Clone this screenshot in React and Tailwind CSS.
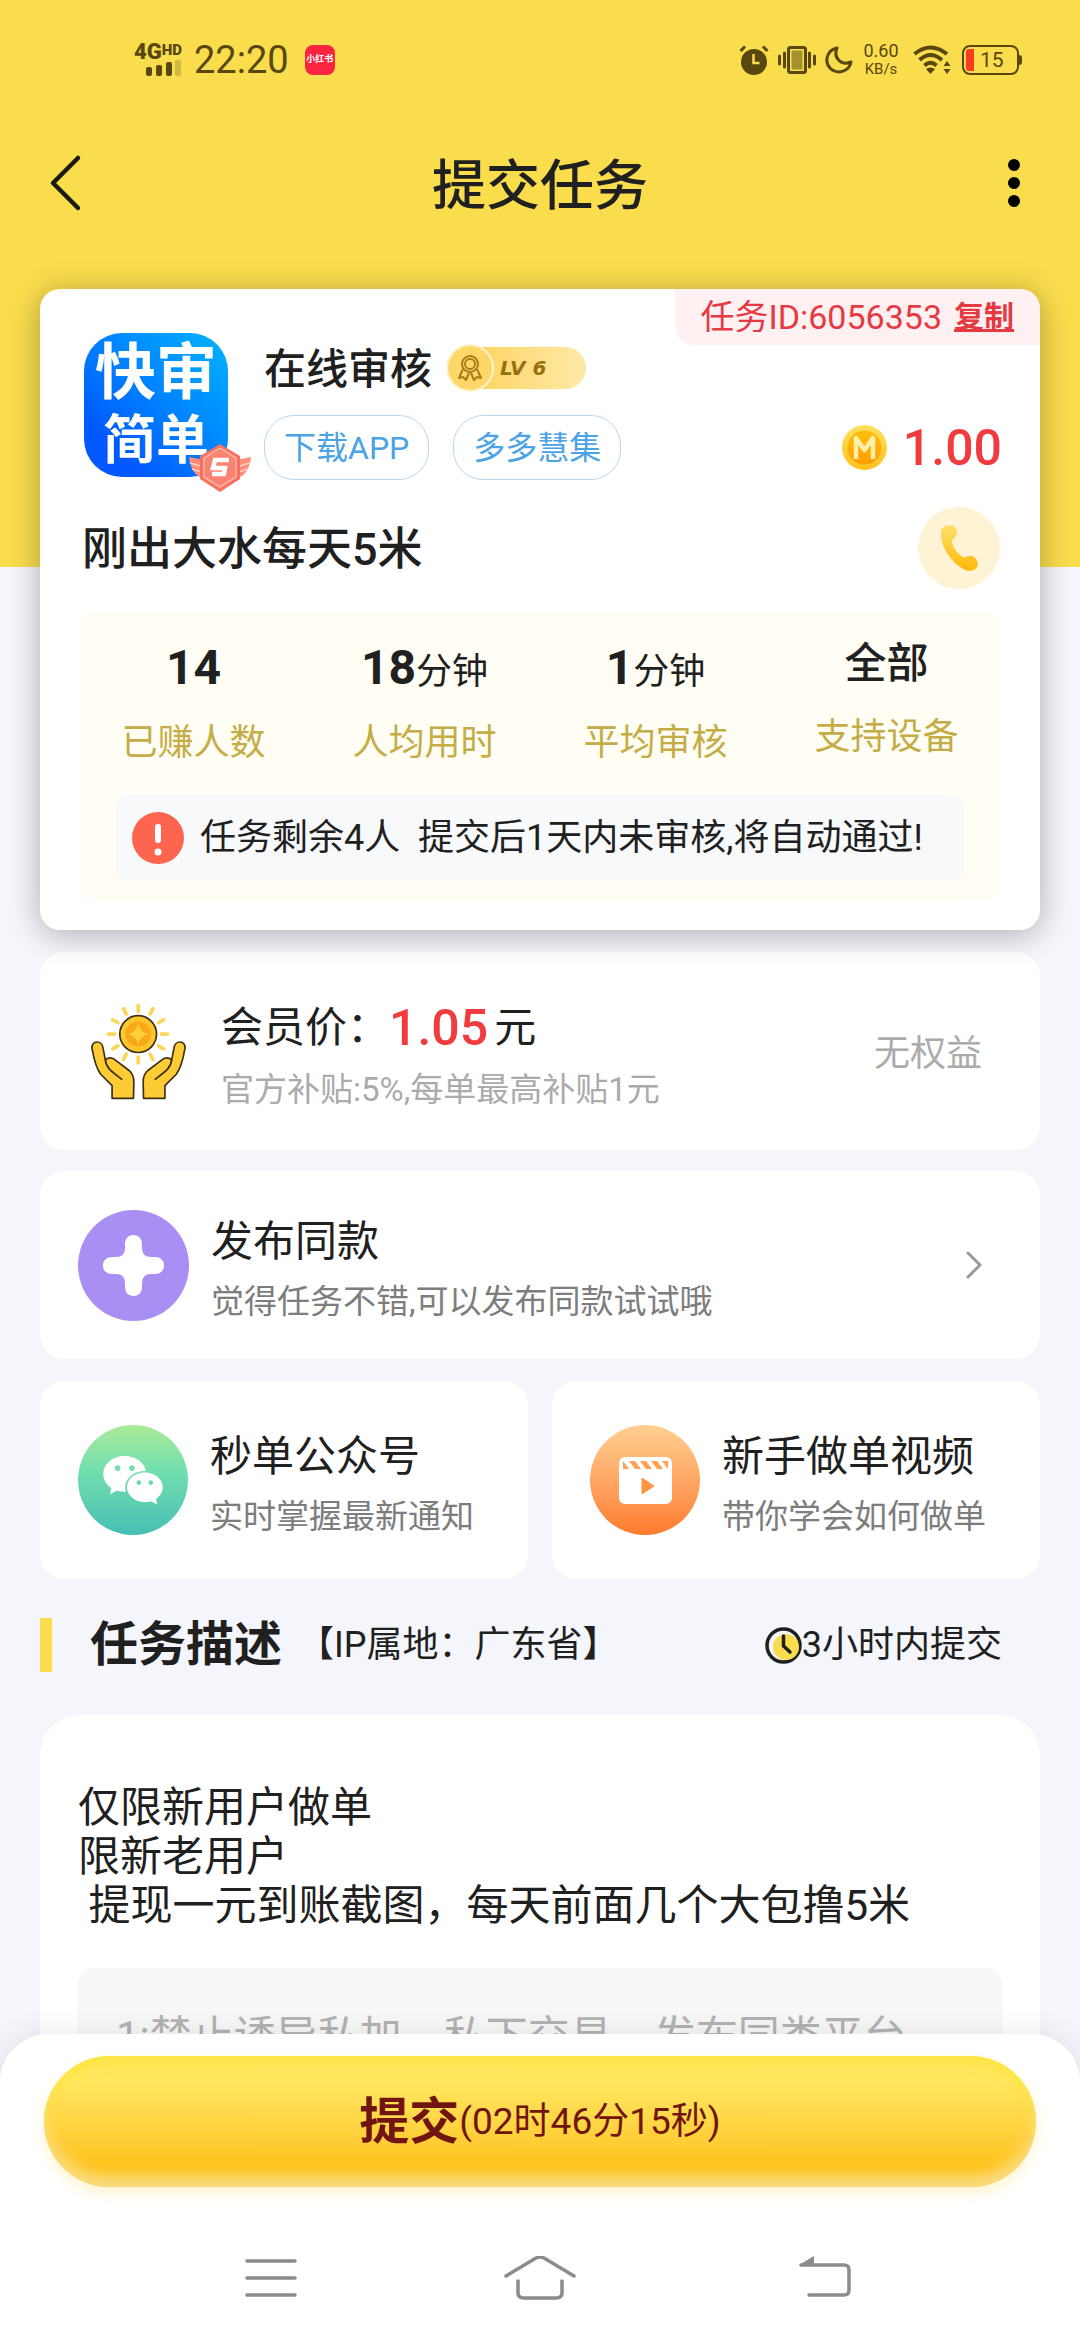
import React from "react";
import { AiFillWechat } from "react-icons/ai";

function StatusBar() {
  return (
    <div className="flex h-[120px] shrink-0 items-center justify-between pr-[58px] pl-[136px] text-[#57480f]">
      <div className="flex items-center">
        <div className="flex w-[46px] flex-col items-end">
          <div className="flex items-start font-black">
            <span className="text-[22px] leading-[16px]">4G</span>
            <span className="text-[15px] leading-[12px]">HD</span>
          </div>
          <svg className="h-[16px] w-[36px]" viewBox="0 0 36 16" fill="currentColor">
            <rect x="0" y="7" width="6" height="9" rx="2" />
            <rect x="10" y="5" width="6" height="11" rx="2" />
            <rect x="20" y="2" width="6" height="14" rx="2" />
            <rect x="29" y="0" width="6" height="16" rx="2" opacity="0.25" />
          </svg>
        </div>
        <span className="ml-3 text-[38px] leading-[44px]">22:20</span>
        <span className="ml-4 flex size-[30px] items-center justify-center rounded-lg bg-[#fb2441] text-[9px] font-bold text-white">
          小红书
        </span>
      </div>
      <div className="flex items-center">
        <svg className="h-[30px] w-[30px]" viewBox="0 0 30 30">
          <circle cx="15" cy="17" r="13" fill="currentColor" />
          <path d="M1.500 6L6 1.500M28.500 6L24 1.500" stroke="currentColor" strokeWidth="3" />
          <path d="M14.500 9v9h6" fill="none" stroke="#fadd4d" strokeWidth="2.500" />
        </svg>
        <svg className="ml-[9px] h-[30px] w-[38px]" viewBox="0 0 38 30">
          <rect x="10.500" y="2.500" width="17" height="25" rx="2" fill="#fadd4d" stroke="currentColor" strokeWidth="3" />
          <rect x="13.500" y="5.500" width="11" height="19" fill="#a5922e" />
          <path d="M1.500 11v8M6.500 8v14M31.500 8v14M36.500 11v8" stroke="currentColor" strokeWidth="3" strokeLinecap="round" />
        </svg>
        <svg className="ml-[9px] h-[28px] w-[28px]" viewBox="0 0 28 28">
          <path d="M12 2C2 4 -1 15 5 22C12 29 24 26 26 16C16 20 8 12 12 2Z" fill="none" stroke="currentColor" strokeWidth="3" strokeLinejoin="round" />
        </svg>
        <div className="ml-[9px] flex w-[38px] flex-col items-center">
          <span className="text-[18px] leading-[18px]">0.60</span>
          <span className="text-[15px] leading-[18px]">KB/s</span>
        </div>
        <svg className="ml-[13px] h-[30px] w-[38px]" viewBox="0 0 38 30">
          <g fill="none" stroke="currentColor" strokeWidth="4">
            <path d="M1.500 9Q17.500 -4 34 9" />
            <path d="M6.500 15Q17.500 5 29 15" />
            <path d="M11.500 20.500Q17.500 15 23.500 20.500" />
          </g>
          <path d="M13 24Q17.500 21 22 24L17.500 29Z" fill="currentColor" />
          <path d="M30.500 21L34 16L37.500 21ZM30.500 24L34 29L37.500 24Z" fill="currentColor" />
        </svg>
        <div className="ml-[11px] flex items-center">
          <div className="flex h-[30px] w-[57px] items-center rounded-lg border-2 border-current p-[2px]">
            <span className="h-[22px] w-[8px] rounded-l-[3px] bg-[#fb3a20]" />
            <span className="ml-1.5 text-[21px] leading-[22px]">15</span>
          </div>
          <span className="h-[10px] w-[3px] rounded-r-sm bg-current" />
        </div>
      </div>
    </div>
  );
}

function Header() {
  return (
    <header className="grid h-[126px] shrink-0 grid-cols-[1fr_auto_1fr] items-center px-12">
      <button type="button" aria-label="返回" className="justify-self-start">
        <svg className="h-[58px] w-[36px]" viewBox="0 0 36 58">
          <path d="M30 4L5 29L30 54" fill="none" stroke="#1c1a10" strokeWidth="4.500" strokeLinecap="round" strokeLinejoin="round" />
        </svg>
      </button>
      <h1 className="pt-2 text-[54px] leading-[60px] font-medium">提交任务</h1>
      <button type="button" aria-label="更多" className="flex w-[36px] flex-col items-center gap-1.5 justify-self-end">
        <span className="size-3 rounded-full bg-black" />
        <span className="size-3 rounded-full bg-black" />
        <span className="size-3 rounded-full bg-black" />
      </button>
    </header>
  );
}

function LevelBadge() {
  return (
    <div className="relative flex h-[48px] w-[140px] items-center">
      <div className="ml-4 flex h-[42px] flex-1 items-center rounded-full bg-linear-to-r from-[#ffd257] to-[#fde9a6] pl-[38px]">
        <span className="font-['DejaVu_Sans',sans-serif] text-[20px] font-bold text-[#96700c] italic">LV 6</span>
      </div>
      <svg className="absolute top-0 left-0 size-[48px]" viewBox="0 0 48 48">
        <circle cx="24" cy="24" r="23" fill="#ffd769" stroke="#fff3cf" strokeWidth="2" />
        <g fill="none" stroke="#a87c1a" strokeWidth="2" strokeLinejoin="round">
          <circle cx="24" cy="20" r="8" />
          <circle cx="24" cy="20" r="5" />
          <path d="M17 25L13 34L17 33L20 36L23 29M31 25L35 34L31 33L28 36L25 29" />
        </g>
      </svg>
    </div>
  );
}

function AppIcon() {
  return (
    <div className="relative mr-9 flex size-[144px] shrink-0 flex-col items-center rounded-[38px] bg-linear-to-tr from-[#0458ff] from-20% to-[#05b4ff] font-bold text-white">
      <span className="pt-[8px] text-[61px] leading-[64px]">快审</span>
      <span className="text-[53px] leading-[72px]">简单</span>
      <svg className="absolute -right-6 -bottom-4 h-[50px] w-[64px]" viewBox="0 0 64 50">
        <path d="M1 14L16 17V36Q3 32 1 14ZM63 14L48 17V36Q61 32 63 14Z" fill="#ff8d78" />
        <path d="M2 20L16 24M4 26L16 30M62 20L48 24M60 26L48 30" stroke="#ffd0c4" strokeWidth="1.500" />
        <path d="M32 1L52 13V36L32 49L12 36V13Z" fill="#f8705f" />
        <path d="M32 5L48 15V34L32 44L16 34V15Z" fill="#fb8371" stroke="#ffb3a4" strokeWidth="1.500" />
        <path d="M41 17H27L25 25H37L36 31H24" fill="none" stroke="#fff" strokeWidth="4.500" />
      </svg>
    </div>
  );
}

const stats = [
  { value: "14", unit: "", label: "已赚人数" },
  { value: "18", unit: "分钟", label: "人均用时" },
  { value: "1", unit: "分钟", label: "平均审核" },
];

function TaskCard() {
  return (
    <section className="relative rounded-[20px] bg-white px-[38px] pt-[44px] pb-[29px] shadow-[0_4px_32px_rgba(0,0,0,0.3)]">
      <div className="absolute top-0 right-0 flex h-[56px] items-center gap-3 rounded-tr-[20px] rounded-bl-[20px] bg-[#fff0f1] pr-[26px] pl-[25px] text-[#e63a42]">
        <span className="text-[34px] leading-[40px]">任务ID:6056353</span>
        <button type="button" className="text-[30px] leading-[40px] font-bold underline">复制</button>
      </div>
      <div className="flex pl-1.5">
        <AppIcon />
        <div className="min-w-0 flex-1 pt-[11px]">
          <div className="flex h-[48px] items-center gap-3.5">
            <h2 className="pt-1 text-[42px] leading-[48px] font-medium">在线审核</h2>
            <LevelBadge />
          </div>
          <div className="mt-[23px] flex items-center">
            <button type="button" className="h-[65px] rounded-[30px] border border-[#b9d8ee] px-[19px] text-[32px] leading-[40px] text-[#4ba3e6]">
              下载APP
            </button>
            <button type="button" className="ml-6 h-[65px] rounded-[30px] border border-[#b9d8ee] px-[19px] text-[32px] leading-[40px] text-[#4ba3e6]">
              多多慧集
            </button>
            <svg className="mr-4 ml-auto size-[45px]" viewBox="0 0 45 45">
              <defs>
                <linearGradient id="coin" x1="0" y1="0" x2="0" y2="1">
                  <stop offset="0" stopColor="#ffbf0b" />
                  <stop offset="1" stopColor="#ff9d05" />
                </linearGradient>
                <linearGradient id="coinRim" x1="0" y1="0" x2="0" y2="1">
                  <stop offset="0" stopColor="#ffe05f" />
                  <stop offset="1" stopColor="#ffc11c" />
                </linearGradient>
              </defs>
              <circle cx="22.500" cy="22.500" r="22.500" fill="url(#coinRim)" />
              <circle cx="22.500" cy="22.500" r="17" fill="url(#coin)" />
              <path d="M14 34V13L22.500 25L31 13V34" fill="none" stroke="#fff0a8" strokeWidth="4.500" strokeLinejoin="round" />
            </svg>
            <span className="text-[50px] leading-[56px] font-medium text-[#f13b3f]">1.00</span>
          </div>
        </div>
      </div>
      <div className="mt-[27px] flex items-center justify-between pr-0.5 pl-1">
        <h3 className="pt-1 text-[45px] leading-[56px] font-medium">刚出大水每天5米</h3>
        <button type="button" aria-label="联系" className="flex size-[82px] items-center justify-center rounded-full bg-[#fff3d5]">
          <svg className="h-[50px] w-[42px]" viewBox="1010 755 125 150">
            <defs>
              <linearGradient id="phone" x1="0" y1="0" x2="0" y2="1">
                <stop offset="0" stopColor="#ffe06a" />
                <stop offset="1" stopColor="#ffb80a" />
              </linearGradient>
            </defs>
            <path
              d="M1018 785C1018 765 1040 758 1055 764C1068 770 1069 785 1062 795C1055 805 1048 808 1054 820C1060 835 1072 850 1085 858C1095 860 1100 850 1112 854C1126 860 1133 875 1126 888C1118 900 1100 902 1085 893C1050 872 1018 830 1018 785Z"
              fill="url(#phone)"
            />
          </svg>
        </button>
      </div>
      <div className="mt-[23px] rounded-[20px] bg-[#fffdf4] pt-[25px] pb-[21px]">
        <dl className="grid grid-cols-4 text-center">
          {stats.map((s) => (
            <div key={s.label} className="flex flex-col gap-[22px]">
              <dd className="h-[60px] text-[48px] leading-[62px] font-bold">
                {s.value}
                <span className="text-[36px] font-normal">{s.unit}</span>
              </dd>
              <dt className="order-last text-[36px] leading-[48px] text-[#c4ad45]">{s.label}</dt>
            </div>
          ))}
          <div className="flex flex-col gap-[22px]">
            <dd className="text-[42px] leading-[54px] font-medium">全部</dd>
            <dt className="order-last text-[36px] leading-[48px] text-[#c4ad45]">支持设备</dt>
          </div>
        </dl>
        <div className="mx-[38px] mt-[28px] flex h-[85px] items-center rounded-xl bg-[#f8f9fa] px-4">
          <svg className="size-[52px] shrink-0" viewBox="0 0 52 52">
            <circle cx="26" cy="26" r="26" fill="#fe654f" />
            <path d="M26 15V28" stroke="#fff" strokeWidth="6" strokeLinecap="round" />
            <circle cx="26" cy="40" r="3.500" fill="#fff" />
          </svg>
          <p className="ml-4 text-[36px] leading-[48px] whitespace-pre">任务剩余4人  提交后1天内未审核,将自动通过!</p>
        </div>
      </div>
    </section>
  );
}

function HandsIcon() {
  const hand =
    "M36 178C33 155 66 152 69 178L76 214C82 204 98 206 106 214L146 244C158 254 162 266 161 282L160 328H96V290L62 256C50 240 42 214 36 178Z";
  const thumb = "M76 214C78 236 92 246 125 271";
  return (
    <svg className="size-[97px] shrink-0" viewBox="30 43 290 290">
      <g stroke="#fbd658" strokeWidth="11" strokeLinecap="round">
        <path d="M174 50V68M174 204V222M85 136H104M244 136H262M130 60L138 76M218 60L210 76M98 93L113 102M250 93L235 102M98 180L113 171M250 180L235 171M130 212L138 196M218 212L210 196" />
      </g>
      <circle cx="174" cy="136" r="55" fill="#fbc52c" stroke="#3f2f14" strokeWidth="5" />
      <circle cx="174" cy="136" r="38" fill="#faa916" />
      <path d="M174 103Q178 132 207 136Q178 140 174 169Q170 140 141 136Q170 132 174 103Z" fill="#fdd03c" />
      <g fill="#fdcb33" stroke="#3f2f14" strokeWidth="5" strokeLinejoin="round" strokeLinecap="round">
        <path d={hand} />
        <path d={thumb} fill="none" />
        <g transform="translate(350 0) scale(-1 1)">
          <path d={hand} />
          <path d={thumb} fill="none" />
        </g>
      </g>
    </svg>
  );
}

function PriceCard() {
  return (
    <section className="mt-[22px] flex h-[198px] items-center rounded-3xl bg-white pr-[58px] pl-[50px]">
      <HandsIcon />
      <div className="ml-[34px] flex flex-col gap-2.5 pt-3">
        <p className="flex items-center text-[42px] leading-[56px]">
          会员价：<span className="text-[50px] font-medium text-[#f13b3f]">1.05</span>
          <span className="ml-1.5">元</span>
        </p>
        <p className="text-[33px] leading-[48px] text-[#ababab]">官方补贴:5%,每单最高补贴1元</p>
      </div>
      <span className="ml-auto pt-1.5 text-[36px] leading-[48px] text-[#ababab]">无权益</span>
    </section>
  );
}

function CardText({ title, sub }) {
  return (
    <span className="ml-[22px] flex flex-col gap-2 pt-2.5 text-left whitespace-nowrap">
      <span className="text-[42px] leading-[56px]">{title}</span>
      <span className="text-[33px] leading-[48px] text-[#7d7d7d]">{sub}</span>
    </span>
  );
}

function Links() {
  return (
    <>
      <button type="button" className="mt-[21px] flex h-[188px] w-full items-center rounded-3xl bg-white pr-[58px] pl-[38px]">
        <svg className="size-[111px] shrink-0" viewBox="0 0 111 111">
          <circle cx="55.500" cy="55.500" r="55.500" fill="#a98ff3" />
          <path
            d="M55.500 25C61 25 64 29 64 34V38Q64 47 73 47H77C82 47 86 50 86 55.500C86 61 82 64 77 64H73Q64 64 64 73V77C64 82 61 86 55.500 86C50 86 47 82 47 77V73Q47 64 38 64H34C29 64 25 61 25 55.500C25 50 29 47 34 47H38Q47 47 47 38V34C47 29 50 25 55.500 25Z"
            fill="#fff"
          />
        </svg>
        <CardText title="发布同款" sub="觉得任务不错,可以发布同款试试哦" />
        <svg className="ml-auto h-[28px] w-[16px]" viewBox="0 0 16 28">
          <path d="M2 2L14 14L2 26" fill="none" stroke="#999" strokeWidth="3" strokeLinecap="round" strokeLinejoin="round" />
        </svg>
      </button>
      <div className="mt-[22px] grid grid-cols-2 gap-6">
        <button type="button" className="flex h-[198px] items-center rounded-3xl bg-white pl-[38px]">
          <span className="flex size-[110px] shrink-0 items-center justify-center rounded-full bg-linear-to-b from-[#abea98] via-[#73dfae] via-40% to-[#45bfb4] text-white">
            <AiFillWechat className="size-[68px]" />
          </span>
          <CardText title="秒单公众号" sub="实时掌握最新通知" />
        </button>
        <button type="button" className="flex h-[198px] items-center rounded-3xl bg-white pl-[38px]">
          <span className="flex size-[110px] shrink-0 items-center justify-center rounded-full bg-linear-to-b from-[#ffd092] to-[#ff7b2b]">
            <svg className="h-[47px] w-[53px]" viewBox="0 0 53 47">
              <rect width="53" height="47" rx="6" fill="#fff" />
              <path d="M4 4V12L10 12ZM10 4L16 4L22 12H16ZM21 4L27 4L33 12H27ZM32 4L38 4L44 12H38ZM43 4L49 4V12Z" fill="#ffa052" />
              <path d="M23 21L35 29L23 37Z" fill="#ff9346" stroke="#ff9346" strokeWidth="1" strokeLinejoin="round" />
            </svg>
          </span>
          <CardText title="新手做单视频" sub="带你学会如何做单" />
        </button>
      </div>
    </>
  );
}

function Description() {
  return (
    <>
      <div className="mt-[38px] flex items-center pr-[38px]">
        <span className="h-[54px] w-3 bg-[#fadd4d]" />
        <h2 className="ml-[38px] text-[48px] leading-[56px] font-bold">任务描述</h2>
        <span className="ml-4 text-[36px] leading-[48px]">【IP属地：广东省】</span>
        <span className="ml-auto flex items-center text-[36px] leading-[48px]">
          <svg className="size-[37px]" viewBox="0 0 37 37">
            <circle cx="18.500" cy="18.500" r="16.500" fill="#f5f6fb" stroke="#1f1f1f" strokeWidth="3.500" />
            <circle cx="21" cy="20" r="13" fill="#fadd4d" />
            <path d="M18.500 9V19L25 25" fill="none" stroke="#1f1f1f" strokeWidth="3.500" strokeLinecap="round" strokeLinejoin="round" />
          </svg>
          3小时内提交
        </span>
      </div>
      <section className="mt-[42px] rounded-[40px] bg-white px-[38px] pt-[68px] pb-[38px]">
        <p className="text-[42px] leading-[49px] whitespace-pre-wrap">{"仅限新用户做单\n限新老用户\n 提现一元到账截图，每天前面几个大包撸5米"}</p>
        <p className="mt-[38px] rounded-2xl bg-[#f8f8f8] px-[38px] pt-[44px] pb-[38px] text-[42px] leading-[49px] text-[#b3b3b3]">
          1:禁止诱导私加，私下交易，发布同类平台
        </p>
      </section>
    </>
  );
}

function Footer() {
  return (
    <footer className="relative -mt-12 shrink-0 rounded-t-[48px] bg-white px-11 pt-[22px] shadow-[0_0_30px_rgba(0,0,0,0.1)]">
      <button
        type="button"
        className="flex h-[131px] w-full items-center justify-center rounded-full bg-linear-to-b from-[#ffe75f] from-20% to-[#ffc215] to-85% text-[#70150f] shadow-[0_6px_14px_rgba(255,224,130,0.4),inset_0_-14px_14px_-2px_rgba(248,222,140,0.9),inset_0_8px_12px_rgba(253,230,60,0.7)]"
      >
        <span className="text-[50px] leading-[60px] font-bold">提交</span>
        <span className="text-[37px] leading-[60px]">(02时46分15秒)</span>
      </button>
      <nav className="grid h-[153px] grid-cols-[1fr_270px_1fr] items-center pt-7 text-[#8b8b8b]">
        <button type="button" aria-label="任务列表" className="mr-[108px] justify-self-end">
          <svg className="h-[44px] w-[52px]" viewBox="0 0 52 44">
            <path d="M2 5H50M2 22H50M2 39H50" stroke="currentColor" strokeWidth="3.500" strokeLinecap="round" />
          </svg>
        </button>
        <button type="button" aria-label="主页" className="justify-self-center">
          <svg className="h-[44px] w-[72px]" viewBox="0 0 72 44">
            <g fill="none" stroke="currentColor" strokeWidth="3.500" strokeLinecap="round" strokeLinejoin="round">
              <path d="M2 20L32 2Q36 0 40 2L70 20" />
              <path d="M14 25V37Q14 42 20 42H52Q58 42 58 37V25" />
            </g>
          </svg>
        </button>
        <button type="button" aria-label="后退" className="ml-[124px] justify-self-start">
          <svg className="h-[44px] w-[54px]" viewBox="0 0 54 44">
            <path d="M2 9H45Q50 9 50 14V34Q50 39 45 39H10" fill="none" stroke="currentColor" strokeWidth="3.500" strokeLinecap="round" />
            <path d="M0 9L15 0V10Z" fill="currentColor" />
          </svg>
        </button>
      </nav>
    </footer>
  );
}

export default function App() {
  return (
    <div className="flex h-screen flex-col overflow-hidden bg-[linear-gradient(to_bottom,#fadd4d_567px,#f5f6fb_567px)] font-['Roboto','Noto_Sans_CJK_SC',sans-serif] text-[#202020]">
      <StatusBar />
      <Header />
      <main className="min-h-0 flex-1 overflow-y-auto px-10 pt-[43px] pb-12 [scrollbar-width:none]">
        <TaskCard />
        <PriceCard />
        <Links />
        <Description />
      </main>
      <Footer />
    </div>
  );
}
